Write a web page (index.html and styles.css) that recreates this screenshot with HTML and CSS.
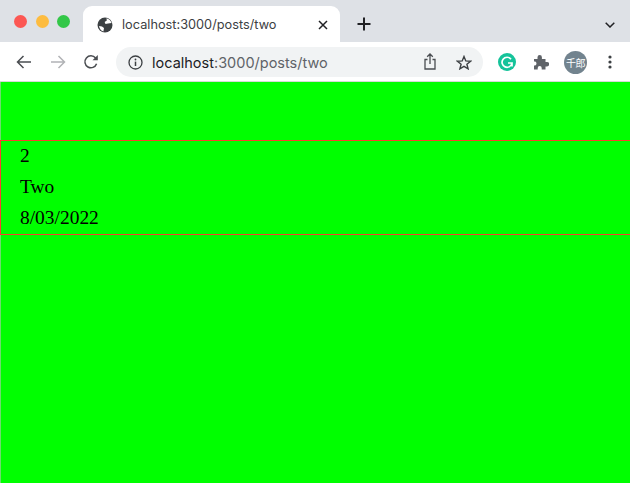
FILE: index.html
```
<!DOCTYPE html>
<html lang="en">
<head>
<meta charset="utf-8">
<title>Two</title>
<link rel="stylesheet" href="styles.css">
</head>
<body>
<div class="window">
  <header class="tabstrip">
    <div class="lights">
      <span class="light red"></span><span class="light yellow"></span><span class="light green"></span>
    </div>
    <div class="tab">
      <svg class="globe" width="16" height="16" viewBox="0 0 16 16"><circle cx="8" cy="8" r="7.5" fill="#3c4043"/><path d="M9.5 1.2 C12 2 14 3.8 14.6 6 L11 6.4 L8.5 7 L7.6 5 L9.8 3.4 Z M2 9 L5 9.4 L7 11 L6.4 14.4 C4 13.8 2.4 11.6 2 9 Z" fill="#fff"/></svg>
      <span class="tab-title">localhost:3000/posts/two</span>
      <svg class="close" width="10" height="10" viewBox="0 0 10 10"><path d="M1 1 L9 9 M9 1 L1 9" stroke="#202124" stroke-width="1.5" fill="none"/></svg>
    </div>
    <svg class="plus" width="14" height="14" viewBox="0 0 14 14"><path d="M7 .5 V13.5 M.5 7 H13.5" stroke="#202124" stroke-width="2" fill="none"/></svg>
    <svg class="chevron" width="10" height="6" viewBox="0 0 10 6"><path d="M.7 .7 L5 5 L9.3 .7" stroke="#202124" stroke-width="1.5" fill="none"/></svg>
  </header>
  <nav class="toolbar">
    <svg class="nav-icon" width="16" height="14" viewBox="0 0 16 14"><path d="M15 7 H1.5 M7.5 1 L1.5 7 L7.5 13" stroke="#4a4d51" stroke-width="1.5" fill="none"/></svg>
    <svg class="nav-icon" width="16" height="14" viewBox="0 0 16 14"><path d="M1 7 H14.5 M8.5 1 L14.5 7 L8.5 13" stroke="#b1b3b6" stroke-width="1.5" fill="none"/></svg>
    <svg class="nav-icon" width="16" height="16" viewBox="0 0 16 16"><path d="M13.6 9.8 A6 6 0 1 1 12.6 4" stroke="#4a4d51" stroke-width="1.5" fill="none"/><path d="M14.8 .9 V6.2 H9.5 Z" fill="#4a4d51"/></svg>
    <div class="omnibox">
      <svg class="info" width="15" height="15" viewBox="0 0 15 15"><circle cx="7.5" cy="7.5" r="6.5" stroke="#3c4043" stroke-width="1.3" fill="none"/><path d="M7.5 6.6 V11" stroke="#3c4043" stroke-width="1.5"/><circle cx="7.5" cy="4.5" r=".9" fill="#3c4043"/></svg>
      <span class="url"><span class="host">localhost</span>:3000/posts/two</span>
      <svg class="share" width="12" height="17" viewBox="0 0 12 17"><path d="M3.5 6.5 H1 V16 H11 V6.5 H8.5 M6 11 V1.2 M3.2 3.8 L6 1 L8.8 3.8" stroke="#4a4d51" stroke-width="1.3" fill="none"/></svg>
      <svg class="star" width="16" height="15" viewBox="0 0 16 15"><path d="M8 1.5 L9.8 5.9 L14.6 6.2 L10.9 9.2 L12.1 13.8 L8 11.3 L3.9 13.8 L5.1 9.2 L1.4 6.2 L6.2 5.9 Z" stroke="#3c4043" stroke-width="1.4" fill="none"/></svg>
    </div>
    <div class="extensions">
      <svg class="ext-g" width="18" height="18" viewBox="0 0 18 18"><circle cx="9" cy="9" r="9" fill="#15c39a"/><path d="M13 6.2 A5 5 0 1 0 14 10 H10 M14 10 V13.5" stroke="#fff" stroke-width="1.7" fill="none"/></svg>
      <svg class="ext-puzzle" width="16" height="16" viewBox="0 0 16 16"><path d="M1 5 H4.5 V3.2 A2.2 2.2 0 0 1 8.9 3.2 V5 H12.5 V8 H14 A2.2 2.2 0 0 1 14 12.4 H12.5 V15.5 H8.7 V14 A2 2 0 0 0 4.7 14 V15.5 H1 V11.5 H2.2 A2.2 2.2 0 0 0 2.2 7.5 H1 Z" fill="#5f6368"/></svg>
      <span class="avatar">千郎</span>
      <svg class="menu" width="4" height="14" viewBox="0 0 4 14"><circle cx="2" cy="2" r="1.6" fill="#3c4043"/><circle cx="2" cy="7" r="1.6" fill="#3c4043"/><circle cx="2" cy="12" r="1.6" fill="#3c4043"/></svg>
    </div>
  </nav>
  <main class="page">
    <article class="post">
      <p>2</p>
      <p>Two</p>
      <p>8/03/2022</p>
    </article>
  </main>
</div>
</body>
</html>
```
FILE: styles.css
```
* { box-sizing: border-box; }
html, body { margin: 0; height: 100%; overflow: hidden; }
.window { width: 630px; height: 483px; display: flex; flex-direction: column; font-family: "Inter", "Liberation Sans", sans-serif; }

.tabstrip { height: 42px; flex: none; background: #dee1e6; display: flex; align-items: flex-start; padding-left: 14px; padding-right: 15px; }
.lights { display: flex; gap: 8.5px; padding-top: 15px; }
.light { width: 13px; height: 13px; border-radius: 50%; }
.red { background: #fc5753; }
.yellow { background: #fdbc40; }
.green { background: #33c748; }

.tab { margin-left: 13px; margin-top: 6px; width: 257px; height: 36px; background: #fff; border-radius: 9px 9px 0 0; display: flex; align-items: center; padding: 0 13px 0 14px; }
.globe { flex: none; margin-top: 1px; }
.tab-title { margin-left: 9px; font-size: 12.75px; color: #3c4043; flex: 1; white-space: nowrap; margin-top: 1px; }
.close { flex: none; margin-right: -1px; margin-top: 1px; }
.plus { margin-left: 17px; margin-top: 17px; flex: none; }
.chevron { margin-left: auto; margin-top: 22px; flex: none; }

.toolbar { height: 40px; flex: none; background: #fff; border-bottom: 1px solid #d5dbd5; display: flex; align-items: center; padding-left: 16px; padding-top: 1px; }
.nav-icon { flex: none; margin-right: 18px; }
.nav-icon:nth-child(3) { margin-right: 17px; margin-left: -1px; }
.omnibox { width: 367px; height: 30px; border-radius: 15px; background: #f1f3f4; display: flex; align-items: center; padding: 0 11px 0 12px; flex: none; }
.info { flex: none; }
.url { margin-left: 9px; font-size: 14.5px; color: #5f6368; flex: 1; white-space: nowrap; }
.host { color: #202124; }
.share { flex: none; margin-right: 20px; margin-top: -1px; }
.star { flex: none; }

.extensions { display: flex; align-items: center; margin-left: 15px; }
.ext-puzzle { margin-left: 17px; }
.avatar { width: 23px; height: 23px; border-radius: 50%; background: #72838e; color: #fff; font-family: "Noto Sans CJK JP", sans-serif; font-size: 10px; display: flex; align-items: center; justify-content: center; margin-left: 15px; letter-spacing: -.5px; }
.menu { margin-left: 21px; }

.page { flex: 1; background: #00ff00; padding-top: 58px; border-left: 1px solid #6fdc6f; }
.post { height: 95px; border: 1px solid #ff3b2f; margin-left: -1px; padding: 4px 19px 0; font-family: "Liberation Serif", serif; font-size: 19.45px; color: #000; display: flex; flex-direction: column; gap: 9px; border-right: 0; }
.post p { margin: 0; line-height: 22px; }
```
